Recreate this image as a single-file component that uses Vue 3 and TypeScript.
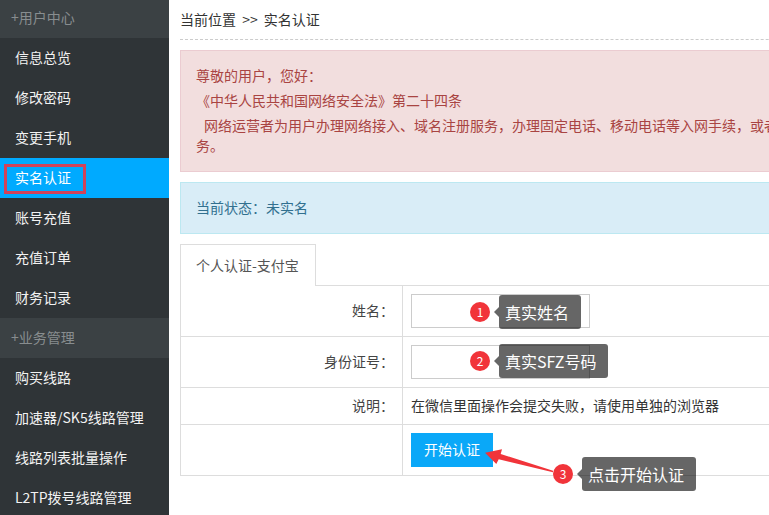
<script setup lang="ts">
type NavItem = { label: string; head?: boolean; active?: boolean };

const nav: NavItem[] = [
  { label: "+用户中心", head: true },
  { label: "信息总览" },
  { label: "修改密码" },
  { label: "变更手机" },
  { label: "实名认证", active: true },
  { label: "账号充值" },
  { label: "充值订单" },
  { label: "财务记录" },
  { label: "+业务管理", head: true },
  { label: "购买线路" },
  { label: "加速器/SK5线路管理" },
  { label: "线路列表批量操作" },
  { label: "L2TP拨号线路管理" },
];
</script>

<template>
  <div class="page">
    <aside class="sidebar">
      <div
        v-for="item in nav"
        :key="item.label"
        class="nav-item"
        :class="{ head: item.head, active: item.active }"
      >
        {{ item.label }}
        <span v-if="item.active" class="mark"></span>
      </div>
    </aside>

    <main class="main">
      <div class="crumb">当前位置 &gt;&gt; 实名认证</div>

      <div class="alert danger">
        <p>尊敬的用户，您好：</p>
        <p>《中华人民共和国网络安全法》第二十四条</p>
        <p class="law">
          网络运营者为用户办理网络接入、域名注册服务，办理固定电话、移动电话等入网手续，或者为用户提供信息发布、即时通讯等服务，应当要求用户提供真实身份信息。用户不提供真实身份信息的，网络运营者不得为其提供相关服<br />务。
        </p>
      </div>

      <div class="alert info">当前状态：未实名</div>

      <div class="tabs">
        <div class="tab">个人认证-支付宝</div>
      </div>

      <table class="form">
        <tbody>
          <tr class="row-input">
            <th>姓名：</th>
            <td><input class="field" type="text" /></td>
          </tr>
          <tr class="row-input">
            <th>身份证号：</th>
            <td><input class="field" type="text" /></td>
          </tr>
          <tr class="row-note">
            <th>说明：</th>
            <td class="note-text">在微信里面操作会提交失败，请使用单独的浏览器</td>
          </tr>
          <tr class="row-btn">
            <th></th>
            <td><button class="btn" type="button">开始认证</button></td>
          </tr>
        </tbody>
      </table>
    </main>

    <div class="note note-1">
      <span class="badge">1</span>
      <span class="tip">真实姓名</span>
    </div>
    <div class="note note-2">
      <span class="badge">2</span>
      <span class="tip">真实SFZ号码</span>
    </div>
    <div class="note note-3">
      <span class="badge">3</span>
      <span class="tip">点击开始认证</span>
    </div>

    <svg class="pointer" width="72" height="28" viewBox="0 0 72 28">
      <path
        d="M1 4.700 L18 1.300 L16.700 6 L69 22.700 L69 24.300 L14.700 11.300 L12.300 16 Z"
        fill="#f1343a"
      />
    </svg>
  </div>
</template>

<style>
html,
body {
  margin: 0;
  overflow: hidden;
}
</style>

<style scoped>
.page {
  position: relative;
  display: flex;
  width: 769px;
  height: 515px;
  overflow: hidden;
  background: #fff;
  font-family: "Noto Sans CJK SC", "Liberation Sans", sans-serif;
  font-size: 14px;
  color: #333;
}

.sidebar {
  flex: 0 0 169px;
  margin-top: -2px;
  background: #2f3437;
}
.nav-item {
  position: relative;
  height: 40px;
  padding-left: 15px;
  line-height: 38px;
  color: #f2f2f2;
  white-space: nowrap;
}
.nav-item.head {
  padding-left: 11px;
  background: #3b4144;
  color: #888d8f;
}
.nav-item.active {
  background: #00aaff;
  color: #fff;
}
.mark {
  position: absolute;
  left: 4px;
  top: 6px;
  width: 82px;
  height: 30px;
  box-sizing: border-box;
  border: 3px solid #d1435a;
}

.main {
  flex: 0 0 1700px;
  padding-left: 11px;
}

.crumb {
  height: 39px;
  line-height: 38px;
  border-bottom: 1px dashed #ccc;
  margin-bottom: 10px;
  color: #333;
  word-spacing: 3px;
}

.alert {
  box-sizing: border-box;
  margin-bottom: 10px;
  padding: 14px 15px 16px;
  border: 1px solid transparent;
  line-height: 20px;
}
.alert p {
  margin: 0 0 5px;
}
.alert p.law {
  margin: 0;
  white-space: nowrap;
  text-indent: 8px;
}
.danger {
  height: 122px;
  background: #f2dede;
  border-color: #ebccd1;
  color: #a94442;
}
.info {
  height: 52px;
  background: #d9edf7;
  border-color: #bce8f1;
  color: #31708f;
}

.tabs {
  display: flex;
  height: 41px;
}
.tab {
  position: relative;
  z-index: 1;
  width: 136px;
  height: 42px;
  box-sizing: border-box;
  border: 1px solid #ddd;
  border-bottom: 0;
  background: #fff;
  padding-left: 15px;
  line-height: 40px;
  color: #555;
}

.form {
  width: 100%;
  border-collapse: collapse;
}
.form th,
.form td {
  box-sizing: border-box;
  border: 1px solid #ddd;
  padding: 0 8px;
}
.form th {
  width: 222px;
  padding-bottom: 2px;
  text-align: right;
  font-weight: 400;
  color: #444;
}
.form td.note-text {
  padding-bottom: 2px;
}
.row-input {
  height: 51px;
}
.row-note {
  height: 37px;
}
.row-btn {
  height: 51px;
}

.field {
  display: block;
  width: 179px;
  height: 34px;
  box-sizing: border-box;
  border: 1px solid #ccc;
  background: #fff;
  outline: none;
}
.btn {
  display: block;
  width: 82px;
  height: 34px;
  border: 0;
  padding: 0 0 2px;
  background: #0aa8f8;
  color: #fff;
  font-family: inherit;
  font-size: 14px;
}

.note {
  position: absolute;
  display: flex;
  align-items: center;
}
.note-1 {
  left: 470px;
  top: 295px;
}
.note-2 {
  left: 470px;
  top: 344px;
}
.note-3 {
  left: 553px;
  top: 457px;
}
.badge {
  width: 20px;
  height: 20px;
  border-radius: 50%;
  background: #f1343a;
  color: #fff;
  font-size: 12px;
  line-height: 20px;
  text-align: center;
}
.tip {
  position: relative;
  margin-left: 9px;
  height: 34px;
  padding: 0 12px 0 6px;
  border-radius: 3px;
  background: rgba(0, 0, 0, 0.6);
  color: #fff;
  font-size: 16px;
  line-height: 34px;
  white-space: nowrap;
}
.tip::before {
  content: "";
  position: absolute;
  left: -5px;
  top: 12px;
  border-top: 5px solid transparent;
  border-bottom: 5px solid transparent;
  border-right: 5px solid rgba(0, 0, 0, 0.6);
}

.pointer {
  position: absolute;
  left: 484px;
  top: 448px;
}
</style>
